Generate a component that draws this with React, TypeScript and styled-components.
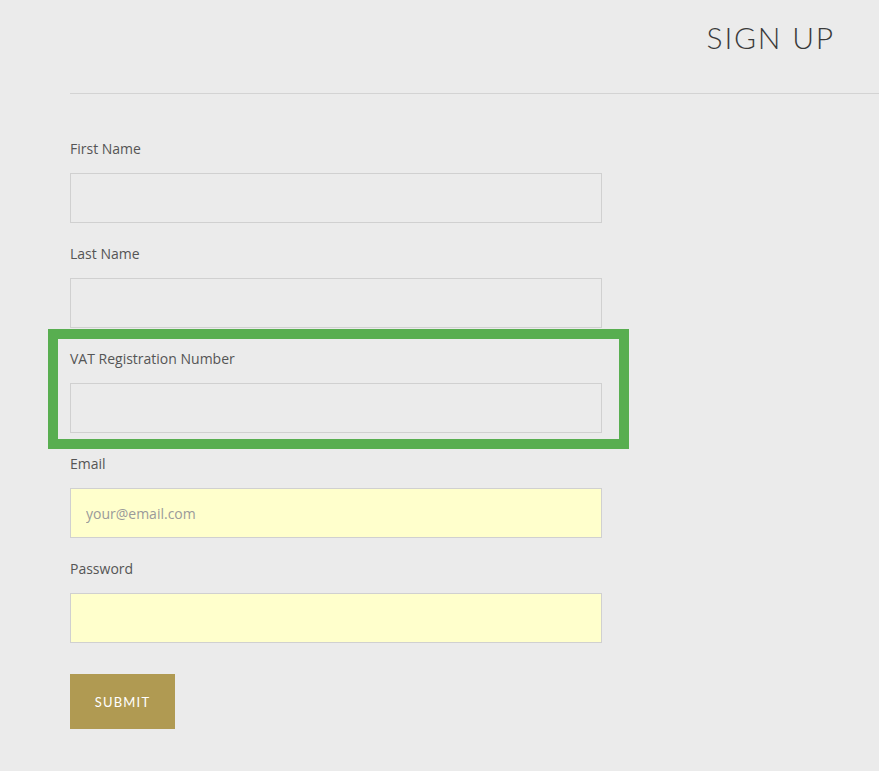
import React, { useState } from 'react';
import styled, { createGlobalStyle } from 'styled-components';

const GlobalStyle = createGlobalStyle`
  html, body {
    margin: 0;
    padding: 0;
    background: #ebebeb;
  }
  * {
    box-sizing: border-box;
  }
`;

const Page = styled.div`
  min-height: 771px;
  background: #ebebeb;
  font-family: 'Open Sans', 'Noto Sans', sans-serif;
`;

const Header = styled.header`
  height: 93px;
  display: flex;
  justify-content: flex-end;
  align-items: flex-start;
  padding: 17px 44px 0 0;
`;

const Title = styled.h1`
  margin: 0;
  font-family: 'Lato', 'Noto Sans', sans-serif;
  font-weight: 300;
  font-size: 30px;
  line-height: 40px;
  letter-spacing: 1.8px;
  color: #3a3a3a;
`;

const Divider = styled.hr`
  margin: 0 0 0 70px;
  border: none;
  border-top: 1px solid #d3d3d3;
`;

const Form = styled.form`
  width: 602px;
  padding: 44px 0 0 70px;
  display: flex;
  flex-direction: column;
  gap: 20px;
`;

const FormGroup = styled.div<{ $highlight?: boolean }>`
  position: relative;
  display: flex;
  flex-direction: column;
  gap: 14px;

  ${({ $highlight }) =>
    $highlight &&
    `
    &::before {
      content: '';
      position: absolute;
      top: -19px;
      bottom: -16px;
      left: -22px;
      right: -27px;
      border: 10px solid #58ae50;
      pointer-events: none;
    }
  `}
`;

const Label = styled.label`
  display: block;
  padding-top: 1px;
  font-size: 14px;
  line-height: 20px;
  color: #555;
`;

const Input = styled.input<{ $autofill?: boolean }>`
  width: 532px;
  height: 50px;
  padding: 0 15px;
  border: 1px solid #d0d0d0;
  border-radius: 0;
  background: ${({ $autofill }) => ($autofill ? '#ffffcc' : '#ebebeb')};
  font-family: 'Open Sans', 'Noto Sans', sans-serif;
  font-size: 14px;
  color: #333;
  outline: none;

  &::placeholder {
    color: #9a9a9a;
  }
`;

const SubmitButton = styled.button`
  margin-top: 11px;
  width: 105px;
  height: 55px;
  border: none;
  background: #b09a52;
  color: #fff;
  font-family: 'Lato', 'Noto Sans', sans-serif;
  font-size: 13px;
  letter-spacing: 1.2px;
  cursor: pointer;

  &:hover {
    background: #a08a44;
  }
`;

const App: React.FC = () => {
  const [values, setValues] = useState({
    first: '',
    last: '',
    vat: '',
    email: '',
    password: '',
  });

  const update = (key: keyof typeof values) => (e: React.ChangeEvent<HTMLInputElement>) =>
    setValues({ ...values, [key]: e.target.value });

  return (
    <Page>
      <GlobalStyle />
      <Header>
        <Title>SIGN UP</Title>
      </Header>
      <Divider />
      <Form onSubmit={(e) => e.preventDefault()}>
        <FormGroup>
          <Label htmlFor="first">First Name</Label>
          <Input id="first" value={values.first} onChange={update('first')} />
        </FormGroup>
        <FormGroup>
          <Label htmlFor="last">Last Name</Label>
          <Input id="last" value={values.last} onChange={update('last')} />
        </FormGroup>
        <FormGroup $highlight>
          <Label htmlFor="vat">VAT Registration Number</Label>
          <Input id="vat" value={values.vat} onChange={update('vat')} />
        </FormGroup>
        <FormGroup>
          <Label htmlFor="email">Email</Label>
          <Input
            $autofill
            id="email"
            type="email"
            placeholder="your@email.com"
            value={values.email}
            onChange={update('email')}
          />
        </FormGroup>
        <FormGroup>
          <Label htmlFor="password">Password</Label>
          <Input
            $autofill
            id="password"
            type="password"
            value={values.password}
            onChange={update('password')}
          />
        </FormGroup>
        <div>
          <SubmitButton type="submit">SUBMIT</SubmitButton>
        </div>
      </Form>
    </Page>
  );
};

export default App;
